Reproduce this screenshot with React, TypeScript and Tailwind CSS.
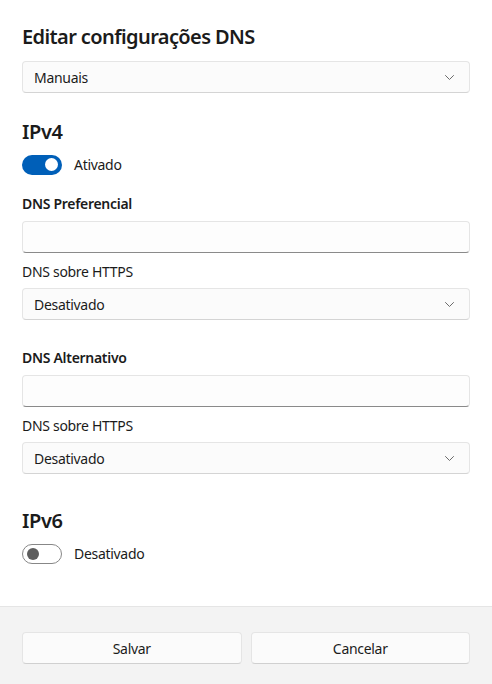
const font = { fontFamily: '"Noto Sans", "Open Sans", sans-serif' };

function Chevron() {
    return (
        <svg width="9" height="5" viewBox="0 0 9 5" className="text-[#6b6b6b]">
            <path d="M0.5 0.5 L4.5 4.5 L8.5 0.5" fill="none" stroke="currentColor" strokeWidth="1" strokeLinecap="round" strokeLinejoin="round" />
        </svg>
    )
}

function Select({ value, className = "" }: { value: string; className?: string }) {
    return (
        <div className={`flex h-[32px] items-center justify-between rounded-[4px] border border-[#e5e5e5] border-b-[#d4d4d4] bg-[#fbfbfb] pl-[11px] pr-[15px] text-[14px] tracking-[-0.3px] text-[#1b1b1b] ${className}`}>
            <span>{value}</span>
            <Chevron />
        </div>
    )
}

function TextBox({ className = "" }: { className?: string }) {
    return (
        <div className={`h-[32px] rounded-[4px] border border-[#e5e5e5] border-b-[#8a8a8a] bg-[#fdfdfd] ${className}`} />
    )
}

function Toggle({ on, label, className = "" }: { on: boolean; label: string; className?: string }) {
    return (
        <div className={`flex items-center gap-3 ${className}`}>
            {on ? (
                <div className="flex h-[20px] w-[40px] items-center justify-end rounded-full bg-[#005fb8] pr-[4px]">
                    <div className="h-[13px] w-[13px] rounded-full bg-white" />
                </div>
            ) : (
                <div className="flex h-[20px] w-[40px] items-center rounded-full border border-[#878787] pl-[4px]">
                    <div className="h-[12px] w-[12px] rounded-full bg-[#5d5d5d]" />
                </div>
            )}
            <span className="pt-[1px] text-[14px] leading-[20px] tracking-[-0.3px] text-[#1b1b1b]">{label}</span>
        </div>
    )
}

export default function App() {
    return (
        <div style={font} className="flex h-[684px] w-full flex-col bg-white text-[#1b1b1b]">
            <div className="flex flex-1 flex-col px-[22px] pt-[23px]">
                <h1 className="text-[20px] font-semibold leading-[28px] tracking-[-0.6px]">Editar configurações DNS</h1>
                <Select value="Manuais" className="mt-[10px]" />

                <h2 className="mt-[25px] text-[20px] font-semibold leading-[28px] tracking-[-0.4px]">IPv4</h2>
                <Toggle on label="Ativado" className="mt-[8px]" />

                <div className="mt-[19px] text-[14px] font-semibold leading-[20px] tracking-[-0.3px]">DNS Preferencial</div>
                <TextBox className="mt-[7px]" />
                <div className="mt-[9px] text-[14px] leading-[20px] tracking-[-0.3px]">DNS sobre HTTPS</div>
                <Select value="Desativado" className="mt-[6px]" />

                <div className="mt-[28px] text-[14px] font-semibold leading-[20px] tracking-[-0.3px]">DNS Alternativo</div>
                <TextBox className="mt-[7px]" />
                <div className="mt-[9px] text-[14px] leading-[20px] tracking-[-0.3px]">DNS sobre HTTPS</div>
                <Select value="Desativado" className="mt-[6px]" />

                <h2 className="mt-[33px] text-[20px] font-semibold leading-[28px] tracking-[-0.4px]">IPv6</h2>
                <Toggle on={false} label="Desativado" className="mt-[8px]" />
            </div>

            <div className="grid h-[78px] grid-cols-2 gap-[9px] border-t border-[#e5e5e5] bg-[#f3f3f3] px-[22px] pt-[25px]">
                <button className="h-[32px] rounded-[4px] border border-[#e5e5e5] border-b-[#d0d0d0] bg-[#fbfbfb] text-[14px] tracking-[-0.3px] text-[#1b1b1b]">Salvar</button>
                <button className="h-[32px] rounded-[4px] border border-[#e5e5e5] border-b-[#d0d0d0] bg-[#fbfbfb] text-[14px] tracking-[-0.3px] text-[#1b1b1b]">Cancelar</button>
            </div>
        </div>
    )
}
